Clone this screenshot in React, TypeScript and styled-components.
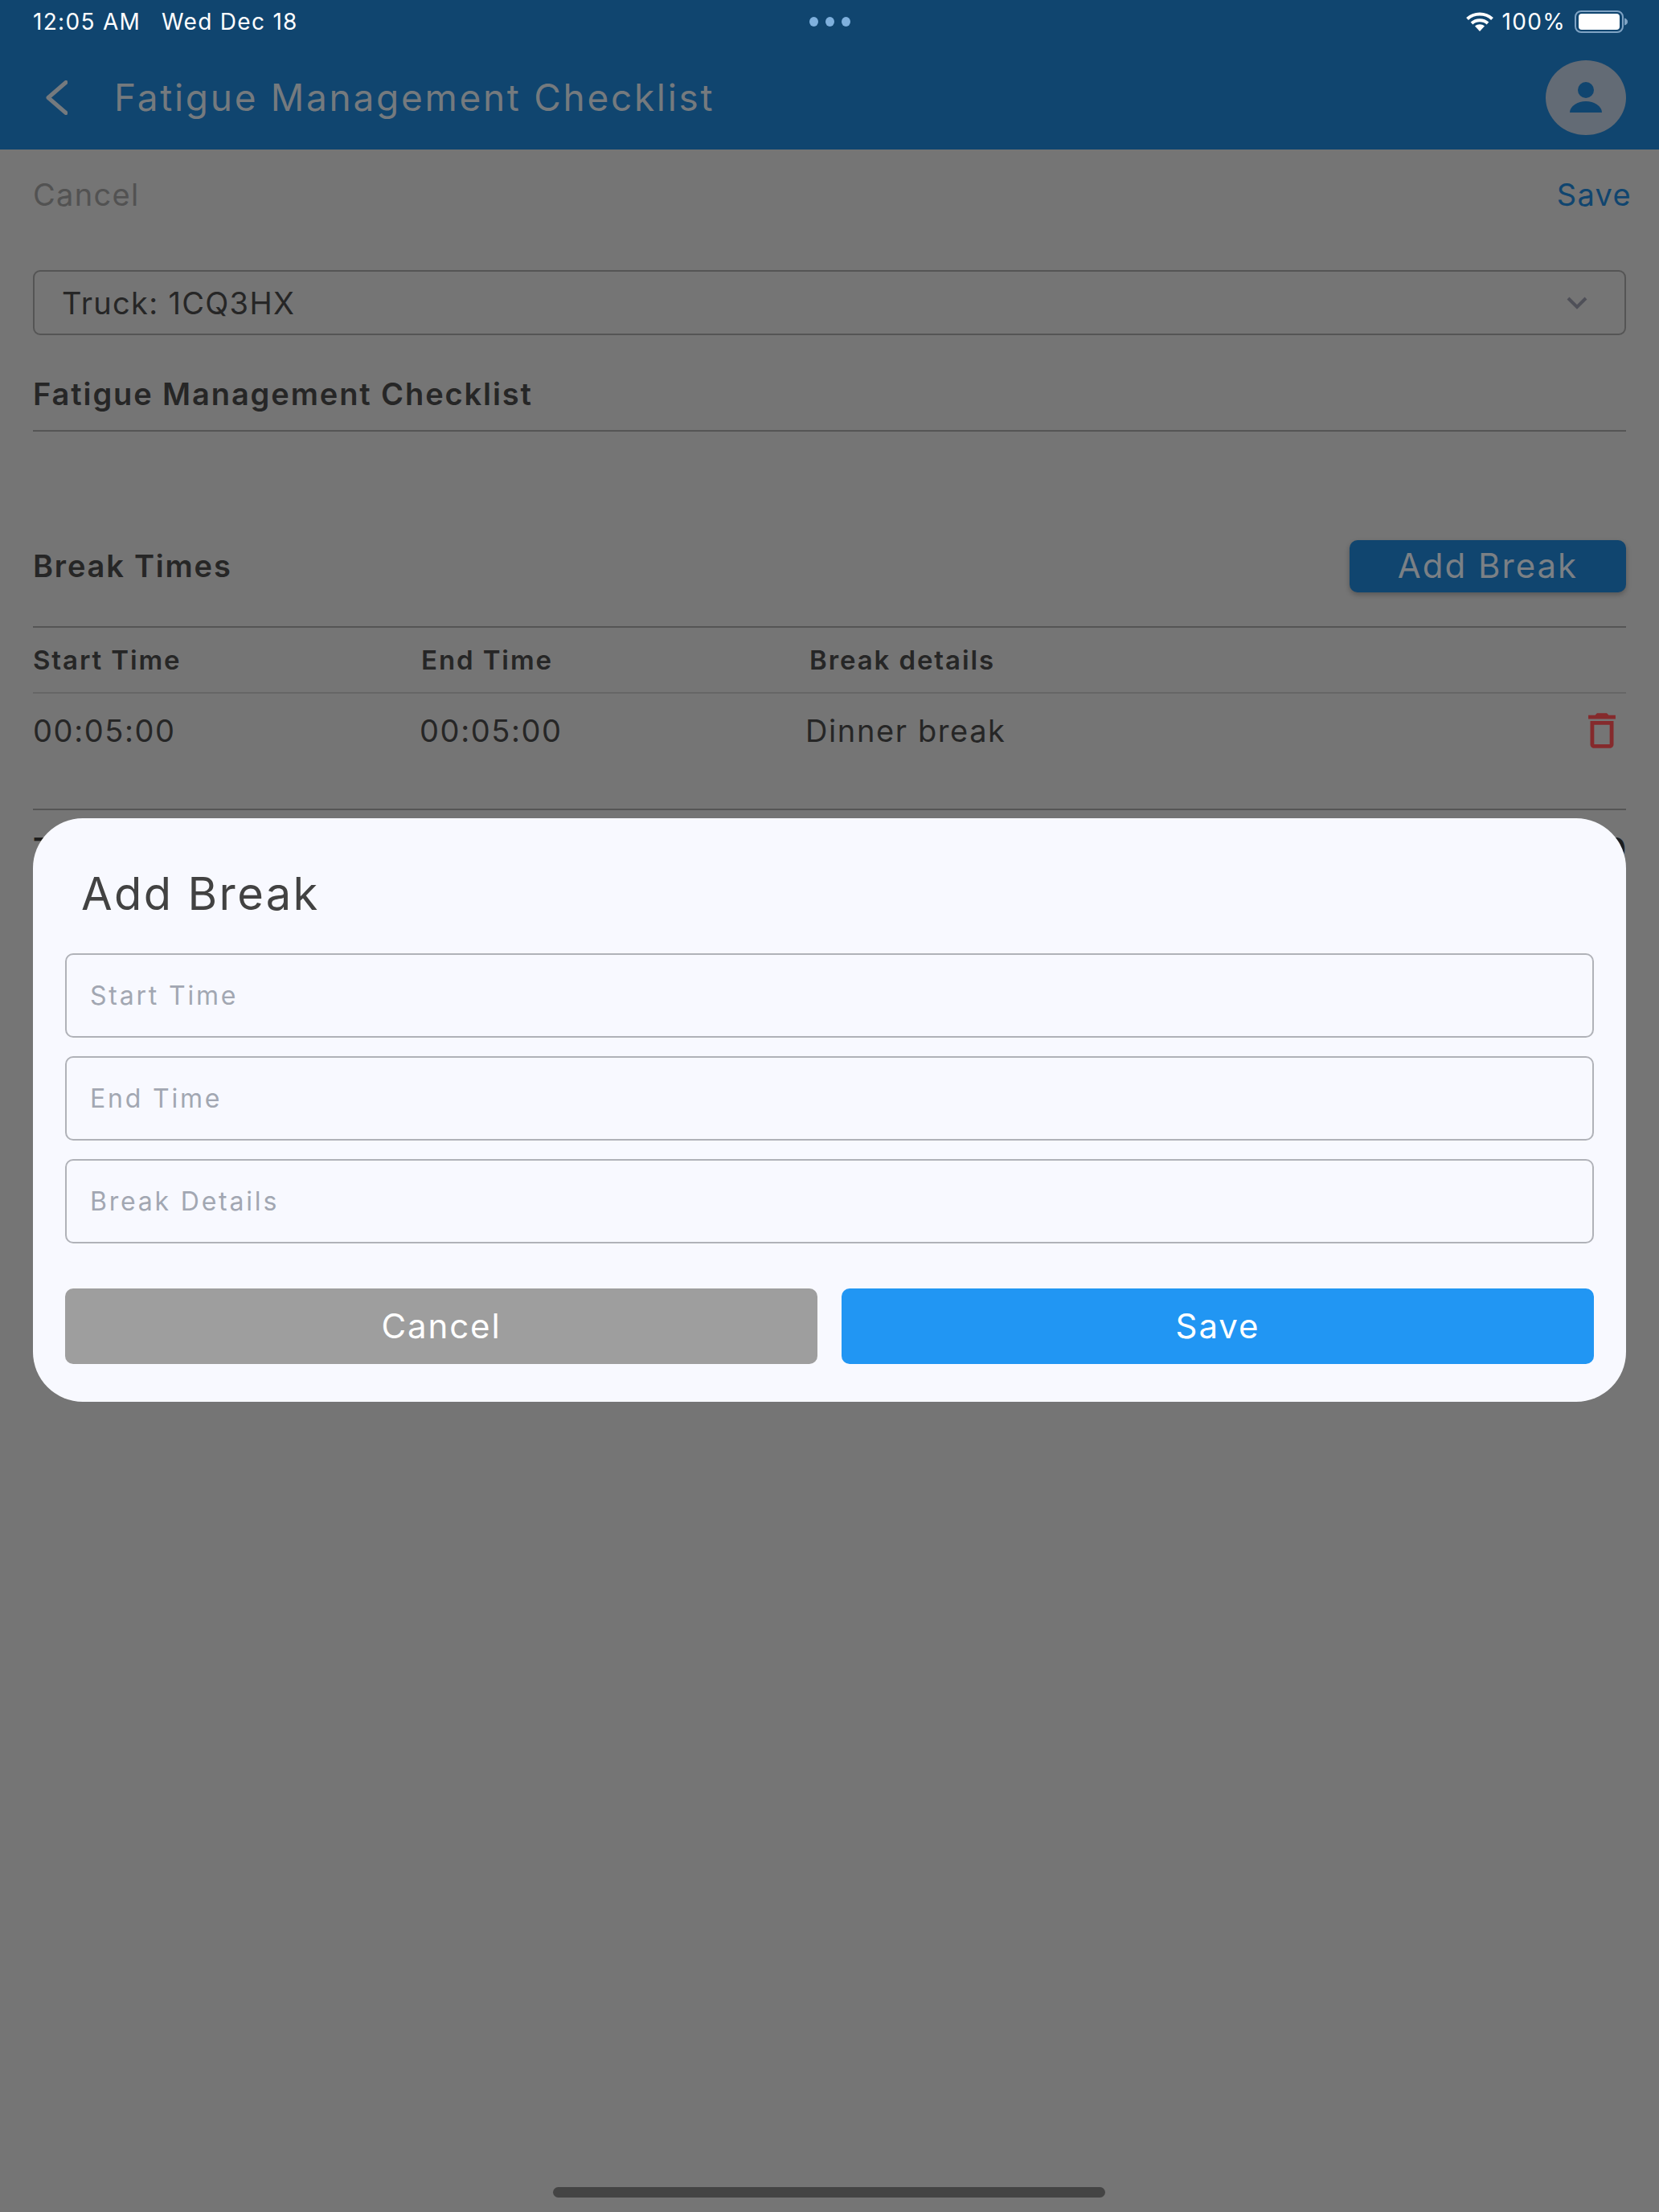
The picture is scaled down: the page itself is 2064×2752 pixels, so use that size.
import * as React from 'react';
import styled, { createGlobalStyle } from 'styled-components';

const GlobalStyle = createGlobalStyle`
	html, body {
		margin: 0;
		padding: 0;
		background: #757575;
	}
	* {
		box-sizing: border-box;
	}
`;

const Screen = styled.div`
	position: relative;
	width: 2064px;
	height: 2752px;
	overflow: hidden;
	background: #757575;
	font-family: Inter, 'Noto Sans', sans-serif;
	color: #262626;
`;

const AppBar = styled.header`
	height: 186px;
	background: #10456f;
	display: flex;
	flex-direction: column;
`;

const StatusBar = styled.div`
	height: 56px;
	padding: 0 38px 3px 41px;
	display: grid;
	grid-template-columns: 1fr auto 1fr;
	align-items: center;
	color: #fff;
	font-size: 28px;
	letter-spacing: 1.3px;
`;

const StatusLeft = styled.div`
	display: flex;
	gap: 26px;
`;

const StatusRight = styled.div`
	display: flex;
	justify-content: flex-end;
	align-items: center;
	gap: 11px;
`;

const Dots = styled.div`
	display: flex;
	gap: 9px;
	margin-left: -2px;
`;

const Dot = styled.span`
	width: 11px;
	height: 12px;
	border-radius: 50%;
	background: #7fb0dd;
`;

const Toolbar = styled.div`
	height: 130px;
	padding: 0 41px 0 57px;
	display: flex;
	align-items: center;
`;

const Title = styled.h1`
	margin: 0 0 0 58px;
	flex: 1;
	font-size: 46px;
	font-weight: 400;
	letter-spacing: 2.7px;
	color: #757a7e;
`;

const Avatar = styled.div`
	width: 100px;
	height: 93px;
	border-radius: 50%;
	background: #636b75;
	display: flex;
	align-items: center;
	justify-content: center;
`;

const Content = styled.main`
	padding: 0 41px;
	display: flex;
	flex-direction: column;
`;

const ActionRow = styled.div`
	height: 112px;
	margin-right: -7px;
	display: flex;
	justify-content: space-between;
	align-items: center;
	font-size: 38px;
	letter-spacing: 1.3px;
`;

const ActionLink = styled.span<{ $primary?: boolean }>`
	color: ${({ $primary }) => ($primary ? '#10456f' : '#525252')};
`;

const Select = styled.div`
	margin-top: 38px;
	height: 81px;
	padding: 0 46px 0 34px;
	border: 2px solid #555;
	border-radius: 9px;
	display: flex;
	justify-content: space-between;
	align-items: center;
	font-size: 38px;
	letter-spacing: 1.3px;
`;

const Heading = styled.h2`
	margin: 0;
	height: 120px;
	padding-top: 46px;
	line-height: 54px;
	font-size: 38px;
	font-weight: 600;
	letter-spacing: 1.9px;
	border-bottom: 2px solid #555;
`;

const BreakHeader = styled.div`
	margin-top: 135px;
	height: 65px;
	display: flex;
	justify-content: space-between;
	align-items: center;
`;

const BreakTitle = styled.h3`
	margin: 0 0 2px;
	font-size: 38px;
	font-weight: 600;
	letter-spacing: 1.8px;
`;

const AddButton = styled.button`
	width: 344px;
	height: 65px;
	padding: 0 0 2px;
	border: 0;
	border-radius: 10px;
	background: #10456f;
	box-shadow: 0 3px 6px rgba(0, 0, 0, 0.25);
	color: #7b8085;
	font-family: inherit;
	font-size: 42px;
	letter-spacing: 2px;
`;

const TableHead = styled.div`
	margin-top: 42px;
	height: 84px;
	border-top: 2px solid #555;
	border-bottom: 2px solid #666;
	display: grid;
	grid-template-columns: 483px 483px 1fr;
	align-items: center;
	font-size: 33px;
	font-weight: 600;
	letter-spacing: 1.9px;
`;

const TableRow = styled.div`
	height: 145px;
	padding-top: 24px;
	border-bottom: 2px solid #555;
	display: grid;
	grid-template-columns: 481px 480px 1fr 60px;
	align-items: start;
	line-height: 44px;
	font-size: 38px;
	letter-spacing: 1.6px;
`;

const Trash = styled.svg`
	width: 58px;
	height: 58px;
	margin-top: -7px;
	margin-left: 1px;
	display: block;
`;

const TotalRow = styled.div`
	padding-top: 21px;
	line-height: 54px;
	display: flex;
	justify-content: space-between;
	font-size: 38px;
	font-weight: 600;
	color: #1e1e1e;
`;

const Dialog = styled.section`
	position: absolute;
	top: 1018px;
	left: 41px;
	width: 1982px;
	height: 726px;
	padding: 64px 40px 47px;
	border-radius: 62px;
	background: #f8f9ff;
	display: flex;
	flex-direction: column;
`;

const DialogTitle = styled.h2`
	margin: 0 0 44px 20px;
	line-height: 60px;
	font-size: 56px;
	font-weight: 400;
	letter-spacing: 2.4px;
	color: #424242;
`;

const Fields = styled.div`
	display: flex;
	flex-direction: column;
	gap: 24px;
`;

const Field = styled.div`
	height: 105px;
	margin-bottom: -1px;
	padding: 0 29px;
	border: 2px solid #b0b2b8;
	border-radius: 10px;
	display: flex;
	align-items: center;
	font-size: 32px;
	letter-spacing: 2.8px;
	color: #a2a7b2;
`;

const DialogActions = styled.div`
	margin-top: 57px;
	display: flex;
	gap: 30px;
`;

const DialogButton = styled.button<{ $primary?: boolean }>`
	flex: 1;
	height: 94px;
	padding: 0 0 2px;
	border: 0;
	border-radius: 10px;
	background: ${({ $primary }) => ($primary ? '#2196f3' : '#9e9e9e')};
	color: #fff;
	font-family: inherit;
	font-size: 42px;
	letter-spacing: 1.9px;
`;

const HomeBar = styled.div`
	position: absolute;
	left: 688px;
	top: 2721px;
	width: 687px;
	height: 13px;
	border-radius: 7px;
	background: #444;
`;

const Wifi = () => (
	<svg width="34" height="24" viewBox="0 0 34 24" fill="none" stroke="#fff" strokeWidth="4">
		<path d="M1.5 8.5C10 0.5 24 0.5 32.5 8.5" />
		<path d="M7 14C12.5 9 21.5 9 27 14" />
		<path d="M17 24L11 17.5C14.5 14.5 19.5 14.5 23 17.5Z" fill="#fff" stroke="none" />
	</svg>
);

const Battery = () => (
	<svg width="67" height="28" viewBox="0 0 67 28" fill="none">
		<rect x="1" y="1" width="59" height="26" rx="7" stroke="#7fa3c4" strokeWidth="2" />
		<rect x="5" y="4" width="51" height="20" rx="4" fill="#fff" />
		<path d="M62 9.5C65 10.5 66 12 66 14C66 16 65 17.500 62 18.500Z" fill="#7fa3c4" />
	</svg>
);

const App = () => (
	<Screen>
		<GlobalStyle />
		<AppBar>
			<StatusBar>
				<StatusLeft>
					<span>12:05 AM</span>
					<span>Wed Dec 18</span>
				</StatusLeft>
				<Dots>
					<Dot />
					<Dot />
					<Dot />
				</Dots>
				<StatusRight>
					<Wifi />
					<span>100%</span>
					<Battery />
				</StatusRight>
			</StatusBar>
			<Toolbar>
				<svg width="27" height="43" viewBox="0 0 27 43" fill="none" stroke="#757a7e" strokeWidth="5" strokeLinecap="round" strokeLinejoin="round">
					<path d="M25 2.500L3 21.500L25 40.500" />
				</svg>
				<Title>Fatigue Management Checklist</Title>
				<Avatar>
					<svg width="44" height="38" viewBox="0 0 44 38" fill="#10456f">
						<circle cx="22" cy="10" r="10" />
						<path d="M2 38C2 30 12 24 22 24C32 24 42 30 42 38Z" />
					</svg>
				</Avatar>
			</Toolbar>
		</AppBar>
		<Content>
			<ActionRow>
				<ActionLink>Cancel</ActionLink>
				<ActionLink $primary>Save</ActionLink>
			</ActionRow>
			<Select>
				<span>Truck: 1CQ3HX</span>
				<svg width="26" height="16" viewBox="0 0 26 16" fill="none" stroke="#4f5058" strokeWidth="4">
					<path d="M2 2L13 13L24 2" />
				</svg>
			</Select>
			<Heading>Fatigue Management Checklist</Heading>
			<BreakHeader>
				<BreakTitle>Break Times</BreakTitle>
				<AddButton>Add Break</AddButton>
			</BreakHeader>
			<TableHead>
				<span>Start Time</span>
				<span>End Time</span>
				<span>Break details</span>
			</TableHead>
			<TableRow>
				<span>00:05:00</span>
				<span>00:05:00</span>
				<span>Dinner break</span>
				<Trash viewBox="0 0 24 24" fill="#852a2c">
					<path d="M6 19c0 1.100.9 2 2 2h8c1.100 0 2-.9 2-2V7H6v12zM8 9h8v10H8V9zm7.500-5l-1-1h-5l-1 1H5v2h14V4h-3.500z" />
				</Trash>
			</TableRow>
			<TotalRow>
				<span>Total</span>
				<span>0</span>
			</TotalRow>
		</Content>
		<Dialog>
			<DialogTitle>Add Break</DialogTitle>
			<Fields>
				<Field>Start Time</Field>
				<Field>End Time</Field>
				<Field>Break Details</Field>
			</Fields>
			<DialogActions>
				<DialogButton>Cancel</DialogButton>
				<DialogButton $primary>Save</DialogButton>
			</DialogActions>
		</Dialog>
		<HomeBar />
	</Screen>
);

export default App;
